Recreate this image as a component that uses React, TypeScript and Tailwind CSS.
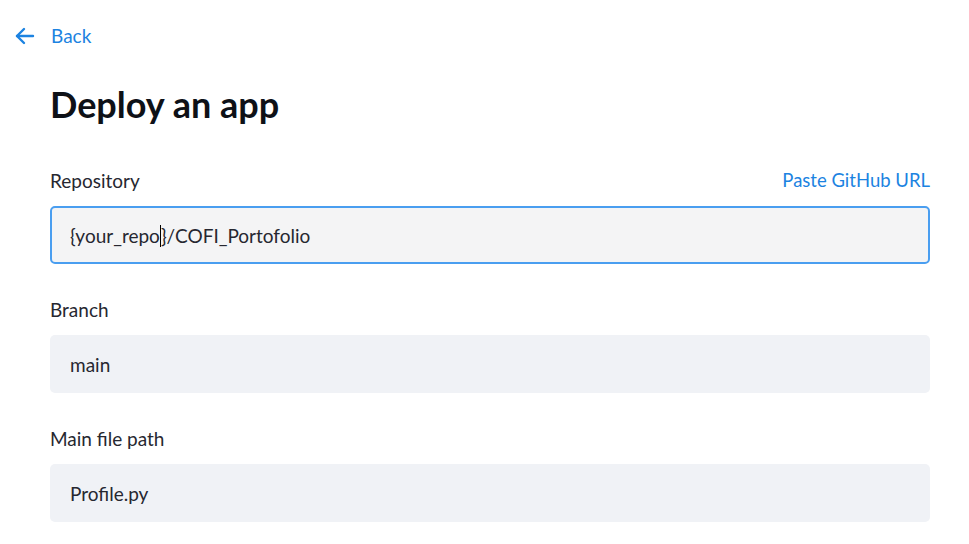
export default function App() {
    const font = { fontFamily: '"Lato", "Liberation Sans", sans-serif' };
    return (
        <div className="min-h-screen bg-white text-[#262730]" style={font}>
            {/* Back link */}
            <div className="flex items-center gap-[14px] pl-[13px] pt-[24px] text-[#1c83e1]">
                <svg width="24" height="24" viewBox="0 0 24 24" fill="none" stroke="currentColor" strokeWidth="2.4" strokeLinecap="round" strokeLinejoin="round">
                    <path d="M20 12H4" />
                    <path d="M11 5l-7 7 7 7" />
                </svg>
                <span className="text-[19px] leading-6">Back</span>
            </div>

            <div className="pl-[50px] pr-[39px]">
                <h1 className="mt-[34px] text-[36px] font-bold leading-[44px] text-[#0e1117]">Deploy an app</h1>

                {/* Repository */}
                <div className="mt-[43px]">
                    <div className="flex h-[24px] items-center justify-between">
                        <span className="text-[19px]">Repository</span>
                        <span className="text-[18.5px] text-[#1c83e1]">Paste GitHub URL</span>
                    </div>
                    <div className="mt-[13px] flex h-[58px] items-center rounded-[5px] border-2 border-[#4a9ef0] bg-[#f4f4f5] px-[18px] pt-[2px] text-[19px]">
                        <span>{'{your_repo'}</span>
                        <span className="inline-block h-[22px] w-px bg-black" />
                        <span>{'}/COFI_Portofolio'}</span>
                    </div>
                </div>

                {/* Branch */}
                <div className="mt-[34px]">
                    <div className="flex h-[24px] items-center">
                        <span className="text-[19px]">Branch</span>
                    </div>
                    <div className="mt-[13px] flex h-[58px] items-center rounded-[5px] bg-[#f0f2f6] px-[20px] pt-[2px] text-[19px]">
                        main
                    </div>
                </div>

                {/* Main file path */}
                <div className="mt-[34px]">
                    <div className="flex h-[24px] items-center">
                        <span className="text-[19px]">Main file path</span>
                    </div>
                    <div className="mt-[13px] flex h-[58px] items-center rounded-[5px] bg-[#f0f2f6] px-[20px] pt-[2px] text-[19px]">
                        Profile.py
                    </div>
                </div>
            </div>
        </div>
    );
}
